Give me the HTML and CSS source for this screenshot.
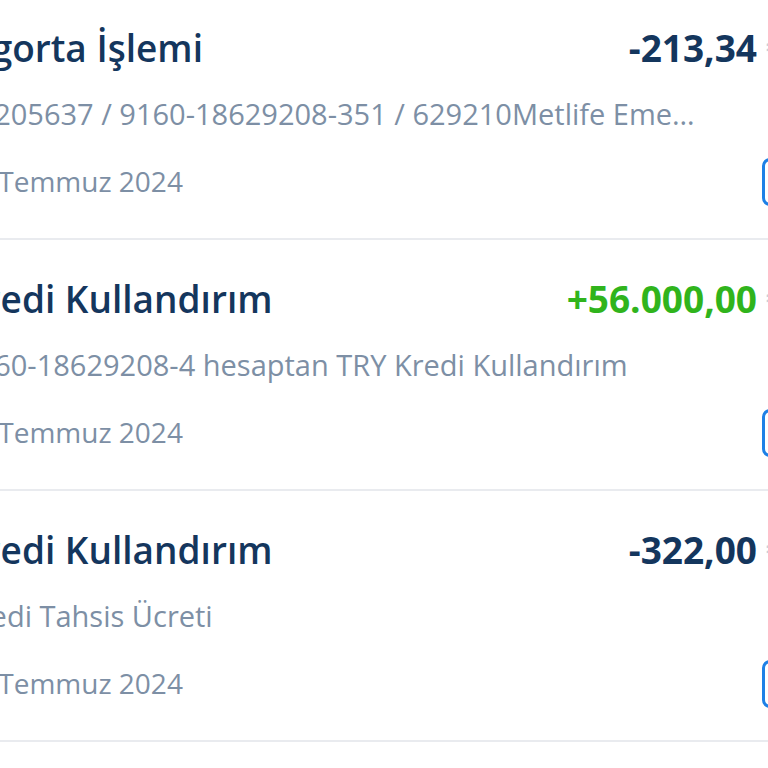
FILE: index.html
```html
<!DOCTYPE html>
<html lang="tr">
<head>
  <meta charset="UTF-8">
  <meta name="viewport" content="width=device-width, initial-scale=1.0">
  <title>Hesap Hareketleri</title>
  <link rel="stylesheet" href="styles.css">
</head>
<body>

  <div class="txn-list">

    <div class="txn">
      <div class="txn-top">
        <span class="txn-title">Sigorta İşlemi</span>
        <span class="txn-amount">-213,34<span class="txn-cur">₺</span></span>
      </div>
      <div class="txn-desc">10205637 / 9160-18629208-351 / 629210Metlife Emeklilik ve Hayat A.Ş.</div>
      <div class="txn-bottom">
        <span class="txn-date">12 Temmuz 2024</span>
        <span class="txn-btn"></span>
      </div>
    </div>

    <div class="txn">
      <div class="txn-top">
        <span class="txn-title">Kredi Kullandırım</span>
        <span class="txn-amount plus">+56.000,00<span class="txn-cur">₺</span></span>
      </div>
      <div class="txn-desc">9160-18629208-4 hesaptan TRY Kredi Kullandırım</div>
      <div class="txn-bottom">
        <span class="txn-date">12 Temmuz 2024</span>
        <span class="txn-btn"></span>
      </div>
    </div>

    <div class="txn">
      <div class="txn-top">
        <span class="txn-title">Kredi Kullandırım</span>
        <span class="txn-amount">-322,00<span class="txn-cur">₺</span></span>
      </div>
      <div class="txn-desc">Kredi Tahsis Ücreti</div>
      <div class="txn-bottom">
        <span class="txn-date">12 Temmuz 2024</span>
        <span class="txn-btn"></span>
      </div>
    </div>

  </div>

</body>
</html>
```

FILE: styles.css
```css
html, body {
  margin: 0;
  overflow: hidden;
  background: #fff;
}

body {
  width: 768px;
  height: 768px;
  font-family: "Open Sans", "Noto Sans", sans-serif;
}

/* the list is cropped on both sides, like the screenshot */
.txn-list {
  width: 829px;
  margin: -11px 0 0 -39px;
}

.txn {
  display: flex;
  flex-direction: column;
  padding: 34px 0 38px;
  border-bottom: 2px solid #e9ebef;
}

.txn-top {
  display: flex;
  justify-content: space-between;
  align-items: baseline;
  height: 50px;
  line-height: 50px;
}

.txn-title {
  font-size: 37px;
  font-weight: 600;
  color: #14365d;
}

.txn-amount {
  font-size: 37px;
  font-weight: 700;
  color: #14365d;
  white-space: nowrap;
}

.txn-amount.plus {
  color: #30b41c;
}

.txn-cur {
  display: inline-block;
  width: 24px;
  margin-left: 9px;
  font-weight: 400;
  color: #c9d0d9;
}

.txn-desc {
  max-width: 742px;
  margin-top: 22px;
  font-size: 29px;
  font-weight: 500;
  line-height: 38px;
  color: #7d8fa5;
  white-space: nowrap;
  overflow: hidden;
  text-overflow: ellipsis;
}

.txn-bottom {
  display: flex;
  justify-content: space-between;
  align-items: center;
  height: 38px;
  margin-top: 29px;
}

.txn-date {
  margin-left: -2px;
  font-size: 28px;
  font-weight: 500;
  line-height: 38px;
  color: #7d8fa5;
}

.txn-btn {
  box-sizing: border-box;
  width: 28px;
  height: 48px;
  margin: -4px 0 -6px;
  border: 3px solid #1e80e6;
  border-radius: 8px;
}
```
